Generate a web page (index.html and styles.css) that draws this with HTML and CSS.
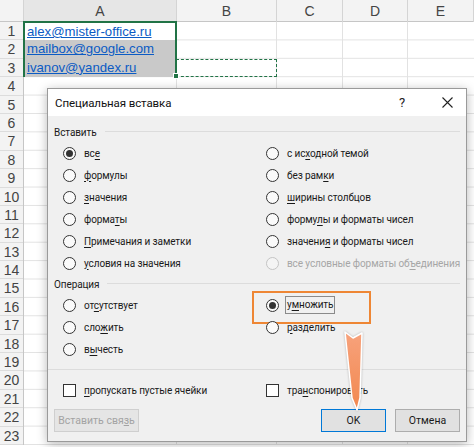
FILE: index.html
```html
<!DOCTYPE html>
<html lang="ru">
<head>
<meta charset="utf-8">
<title>Специальная вставка</title>
<link rel="stylesheet" href="styles.css">
</head>
<body>
<div class="sheet">
  <div class="colheads">
    <div class="corner"></div>
    <div class="ch ch-sel">A</div>
    <div class="ch">B</div>
    <div class="ch">C</div>
    <div class="ch">D</div>
    <div class="ch">E</div>
  </div>
  <div class="main">
    <div class="rowheads">
      <div class="rh">1</div><div class="rh">2</div><div class="rh">3</div><div class="rh">4</div>
      <div class="rh">5</div><div class="rh">6</div><div class="rh">7</div><div class="rh">8</div>
      <div class="rh">9</div><div class="rh">10</div><div class="rh">11</div><div class="rh">12</div>
      <div class="rh">13</div><div class="rh">14</div><div class="rh">15</div><div class="rh">16</div>
      <div class="rh">17</div><div class="rh">18</div><div class="rh">19</div><div class="rh">20</div>
      <div class="rh">21</div><div class="rh">22</div><div class="rh">23</div>
    </div>
    <div class="cells">
      <div class="range">
        <div class="cell"><a class="link">alex@mister-office.ru</a></div>
        <div class="cell cell-hl"><a class="link">mailbox@google.com</a></div>
        <div class="cell cell-hl"><a class="link">ivanov@yandex.ru</a></div>
        <span class="handle"></span>
      </div>
      <div class="ants"></div>
    </div>
  </div>
</div>

<div class="dialog">
  <div class="titlebar">
    <span class="title">Специальная вставка</span>
    <span class="help">?</span>
    <svg class="close" width="11" height="11" viewBox="0 0 11 11"><path d="M0.5 0.5 L10.5 10.5 M10.5 0.5 L0.5 10.5" stroke="#222" stroke-width="1.1" fill="none"/></svg>
  </div>
  <div class="dbody">
    <div class="group"><span class="glabel">Вставить</span><span class="gline"></span></div>
    <div class="opts">
      <label class="opt"><span class="radio on"></span><span>вс<u>е</u></span></label>
      <label class="opt"><span class="radio"></span><span>с ис<u>х</u>одной темой</span></label>
      <label class="opt"><span class="radio"></span><span><u>ф</u>ормулы</span></label>
      <label class="opt"><span class="radio"></span><span>без рам<u>к</u>и</span></label>
      <label class="opt"><span class="radio"></span><span><u>з</u>начения</span></label>
      <label class="opt"><span class="radio"></span><span><u>ш</u>ирины столбцов</span></label>
      <label class="opt"><span class="radio"></span><span>форма<u>т</u>ы</span></label>
      <label class="opt"><span class="radio"></span><span>форму<u>л</u>ы и форматы чисел</span></label>
      <label class="opt"><span class="radio"></span><span><u>П</u>римечания и заметки</span></label>
      <label class="opt"><span class="radio"></span><span>значени<u>я</u> и форматы чисел</span></label>
      <label class="opt"><span class="radio"></span><span><u>у</u>словия на значения</span></label>
      <label class="opt opt-dis"><span class="radio"></span><span>все условные форматы об<u>ъ</u>единения</span></label>
    </div>
    <div class="group"><span class="glabel">Операция</span><span class="gline"></span></div>
    <div class="opts">
      <label class="opt"><span class="radio"></span><span>от<u>с</u>утствует</span></label>
      <label class="opt opt-mark"><span class="radio on"></span><span class="focus">у<u>м</u>ножить</span></label>
      <label class="opt"><span class="radio"></span><span>сло<u>ж</u>ить</span></label>
      <label class="opt"><span class="radio"></span><span><u>р</u>азделить</span></label>
      <label class="opt"><span class="radio"></span><span>в<u>ы</u>честь</span></label>
    </div>
    <div class="sep"></div>
    <div class="opts">
      <label class="opt"><span class="check"></span><span><u>п</u>ропускать пустые ячейки</span></label>
      <label class="opt"><span class="check"></span><span>тра<u>н</u>спонировать</span></label>
    </div>
    <div class="buttons">
      <button class="btn btn-dis">Вставить свя<u>з</u>ь</button>
      <span class="spacer"></span>
      <button class="btn btn-ok">OK</button>
      <button class="btn">Отмена</button>
    </div>
  </div>
</div>

<svg class="arrow" width="30" height="90" viewBox="0 0 30 90">
  <defs>
    <linearGradient id="ag" x1="0" y1="0" x2="0" y2="1">
      <stop offset="0" stop-color="#f7a27c"/>
      <stop offset="1" stop-color="#f2884f"/>
    </linearGradient>
  </defs>
  <polygon points="5,4 13,10 22,5 20,70 17,82 12,70" fill="url(#ag)" stroke="#fff" stroke-width="1.5" stroke-linejoin="round"/>
</svg>
</body>
</html>
```

FILE: styles.css
```css
* { box-sizing: border-box; }
html, body { margin: 0; padding: 0; }
body {
  width: 474px;
  height: 447px;
  overflow: hidden;
  position: relative;
  background: #fff;
  font-family: "Liberation Sans", Arial, sans-serif;
}

.sheet { width: 474px; height: 447px; overflow: hidden; }

.colheads {
  display: grid;
  grid-template-columns: 24px 153px 100px 66px 65px 66px;
  height: 22px;
  background: #f3f3f3;
  border-bottom: 1px solid #c6c6c6;
}
.corner { border-right: 1px solid #d4d4d4; }
.ch {
  border-right: 1px solid #d4d4d4;
  text-align: center;
  font-size: 14px;
  line-height: 22px;
  color: #444;
}
.ch-sel { background: #e6e6e6; }

.main {
  display: grid;
  grid-template-columns: 24px 1fr;
}
.rowheads {
  background: #f3f3f3;
  border-right: 1px solid #c6c6c6;
}
.rh {
  height: 18.4px;
  border-bottom: 1px solid #dcdcdc;
  text-align: center;
  font-size: 14px;
  line-height: 18px;
  color: #444;
}

.cells {
  display: grid;
  grid-template-columns: 153px 100px 66px 65px 66px;
  grid-template-rows: repeat(23, 18.4px);
  background:
    linear-gradient(#e2e2e2, #e2e2e2) 152px 0 / 1px 100% no-repeat,
    linear-gradient(#e2e2e2, #e2e2e2) 252px 0 / 1px 100% no-repeat,
    linear-gradient(#e2e2e2, #e2e2e2) 318px 0 / 1px 100% no-repeat,
    linear-gradient(#e2e2e2, #e2e2e2) 383px 0 / 1px 100% no-repeat,
    linear-gradient(to top, #e2e2e2 1px, transparent 1px) 0 0 / 100% 18.4px repeat-y;
}

.range {
  grid-column: 1;
  grid-row: 1 / 4;
  position: relative;
  border: 2px solid #217346;
  margin: -1px 0 0 -1px;
  display: grid;
  grid-template-rows: 17.4px 18.4px 18.4px;
  background: #fff;
}
.cell {
  padding-left: 2px;
  font-size: 13.2px;
  line-height: 18px;
  white-space: nowrap;
}
.cell-hl { background: #c9c9c9; }
.link {
  color: #0b5bc4;
  text-decoration: underline;
}
.handle {
  position: absolute;
  right: -4px;
  bottom: -4px;
  width: 6px;
  height: 6px;
  background: #217346;
  border: 1px solid #fff;
}
.ants {
  grid-column: 2;
  grid-row: 3;
  border: 1px dashed #217346;
  margin: 0 0 0 -1px;
}

/* Dialog */
.dialog {
  position: absolute;
  left: 47px;
  top: 88px;
  width: 420px;
  height: 354px;
  border: 1px solid #9a9a9a;
  background: #f0f0f0;
  box-shadow: 0 2px 10px rgba(0, 0, 0, 0.28);
  font-family: Roboto, "Noto Sans", sans-serif;
  color: #1a1a1a;
  font-size: 10px;
  letter-spacing: -0.1px;
}
.titlebar {
  height: 27px;
  background: #fff;
  display: flex;
  align-items: center;
  padding-left: 7px;
}
.title { font-size: 11.5px; flex: 1; color: #111; letter-spacing: -0.1px; }
.help { font-size: 13px; width: 12px; margin-right: 31px; color: #222; }
.close { margin-right: 13px; }

.dbody { padding: 6px 6px 0 6px; }
.group {
  display: flex;
  align-items: center;
  height: 20px;
}
.glabel { padding-right: 8px; }
.gline { flex: 1; height: 1px; background: #dcdcdc; margin-top: -1px; }

.opts {
  display: grid;
  grid-template-columns: 203px 1fr;
  grid-auto-rows: 22px;
  padding-left: 9px;
}
.opt {
  display: flex;
  align-items: center;
  gap: 8px;
  white-space: nowrap;
  position: relative;
}
.opt u { text-decoration: underline; text-underline-offset: 2px; }
.radio {
  width: 13px;
  height: 13px;
  border: 1px solid #333;
  border-radius: 50%;
  background: #fafafa;
  display: flex;
  align-items: center;
  justify-content: center;
  flex: none;
}
.radio.on::after {
  content: "";
  width: 7px;
  height: 7px;
  border-radius: 50%;
  background: #333;
}
.opt-dis { color: #a6a6a6; }
.opt-dis .radio { border-color: #c4c4c4; background: #f4f4f4; }
.check {
  width: 13px;
  height: 13px;
  border: 1px solid #333;
  background: #fff;
  flex: none;
}
.focus {
  border: 1px solid #8a8a8a;
  padding: 0 1px;
  margin-left: -2px;
  line-height: 16px;
}
.opt-mark::before {
  content: "";
  position: absolute;
  left: -14px;
  top: -3px;
  width: 115px;
  height: 29px;
  border: 2px solid #ee8634;
}

.sep {
  height: 1px;
  background: #dcdcdc;
  margin: 9px -6px 9px -6px;
}

.buttons {
  display: flex;
  gap: 9px;
  margin-top: 8px;
}
.spacer { flex: 1; }
.btn {
  height: 23px;
  width: 65px;
  border: 1px solid #adadad;
  background: #e1e1e1;
  font-family: Roboto, "Noto Sans", sans-serif;
  font-size: 10.5px;
  color: #1a1a1a;
  padding: 0;
  white-space: nowrap;
}
.btn-dis { width: 85px; color: #a3a3a3; border-color: #cfcfcf; background: #e5e5e5; }
.btn-ok { border-color: #0078d7; }

.arrow {
  position: absolute;
  left: 340px;
  top: 328px;
  filter: drop-shadow(0 0 1px rgba(0,0,0,0.25));
}
```
